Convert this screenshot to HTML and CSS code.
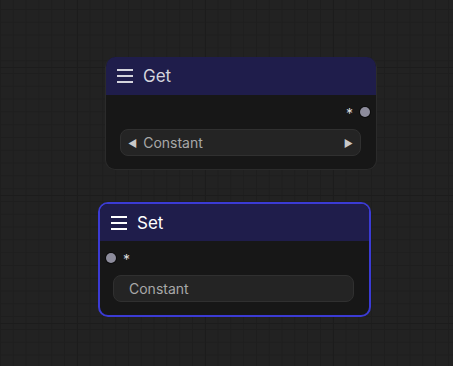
FILE: index.html
```html
<!DOCTYPE html>
<html>
<head>
	<meta charset="UTF-8">
	<title>Get / Set</title>
	<link rel="stylesheet" href="styles.css">
</head>
<body>
	<div class="canvas">
		<div class="node node-get">
			<div class="node-title">
				<svg class="menu" width="16" height="16" viewBox="0 0 16 16">
					<path d="M0 2h16M0 8h16M0 14h16" stroke="currentColor" stroke-width="2"/>
				</svg>
				<span>Get</span>
			</div>
			<div class="node-body">
				<div class="slot slot-out">
					<span class="slot-name">*</span>
					<span class="dot"></span>
				</div>
				<div class="widget combo">
					<span class="arrow">&#9664;</span>
					<span class="widget-text">Constant</span>
					<span class="arrow">&#9654;</span>
				</div>
			</div>
		</div>

		<div class="node node-set">
			<div class="node-title">
				<svg class="menu" width="16" height="16" viewBox="0 0 16 16">
					<path d="M0 2h16M0 8h16M0 14h16" stroke="currentColor" stroke-width="2"/>
				</svg>
				<span>Set</span>
			</div>
			<div class="node-body">
				<div class="slot slot-in">
					<span class="dot"></span>
					<span class="slot-name">*</span>
				</div>
				<div class="widget text">
					<span class="widget-text">Constant</span>
				</div>
			</div>
		</div>
	</div>
</body>
</html>
```

FILE: styles.css
```css
body {
	margin: 0;
	padding: 0;
	background-color: #222;
	font-family: Inter, "Liberation Sans", sans-serif;
}

.canvas {
	position: relative;
	width: 453px;
	height: 366px;
	overflow: hidden;
	background-color: #222;
	background-image:
		linear-gradient(to right, #1c1c1c 1px, transparent 1px),
		linear-gradient(to bottom, #1c1c1c 1px, transparent 1px),
		linear-gradient(to right, #1e1e1e 1px, transparent 1px),
		linear-gradient(to bottom, #1e1e1e 1px, transparent 1px);
	background-size: 128px 128px, 128px 128px, 12.8px 12.8px, 12.8px 12.8px;
	background-position: 77px 67px, 77px 67px, 0 9px, 0 9px;
}

.node {
	position: absolute;
	box-sizing: border-box;
	background-color: #171717;
	border-radius: 10px;
	overflow: hidden;
	display: flex;
	flex-direction: column;
}

.node-get {
	left: 105px;
	top: 57px;
	width: 272px;
	height: 113px;
	border: 1px solid #2b2b2b;
	border-top: none;
}

.node-set {
	left: 98px;
	top: 202px;
	width: 273px;
	height: 115px;
	border: 2px solid #3b3bd4;
}

.node-title {
	display: flex;
	align-items: center;
	gap: 10px;
	height: 38px;
	padding-left: 12px;
	background-color: #1f1d4b;
	color: #d4d4dc;
	font-size: 17px;
}

.node-get .node-title {
	margin: 0 -1px;
	padding-left: 12px;
}

.node-set .node-title {
	height: 37px;
	padding-left: 11px;
	color: #fff;
}

.menu {
	flex: none;
}

.node-body {
	display: flex;
	flex-direction: column;
	padding: 0 15px 0 14px;
}

.node-set .node-body {
	padding: 0 15px 0 13px;
}

.slot {
	display: flex;
	align-items: center;
	gap: 7px;
	height: 34px;
	color: #ddd;
	font-size: 14px;
}

.slot-out {
	justify-content: flex-end;
	margin-right: -9px;
}

.slot-in {
	margin-left: -7px;
	height: 34px;
}

.slot-name {
	padding-top: 3px;
}

.dot {
	width: 10px;
	height: 10px;
	border-radius: 50%;
	background-color: #8d8c9c;
	box-shadow: 0 0 0 1px #0c0c0c;
}

.widget {
	display: flex;
	align-items: center;
	height: 27px;
	box-sizing: border-box;
	border: 1px solid #303030;
	border-radius: 8px;
	background-color: #242424;
	color: #a8a8a8;
	font-size: 14px;
}

.combo {
	padding: 0 7px;
	gap: 6px;
}

.combo .widget-text {
	flex: 1;
}

.arrow {
	font-size: 10px;
	color: #c8c8c8;
}

.text {
	padding-left: 15px;
}
```
